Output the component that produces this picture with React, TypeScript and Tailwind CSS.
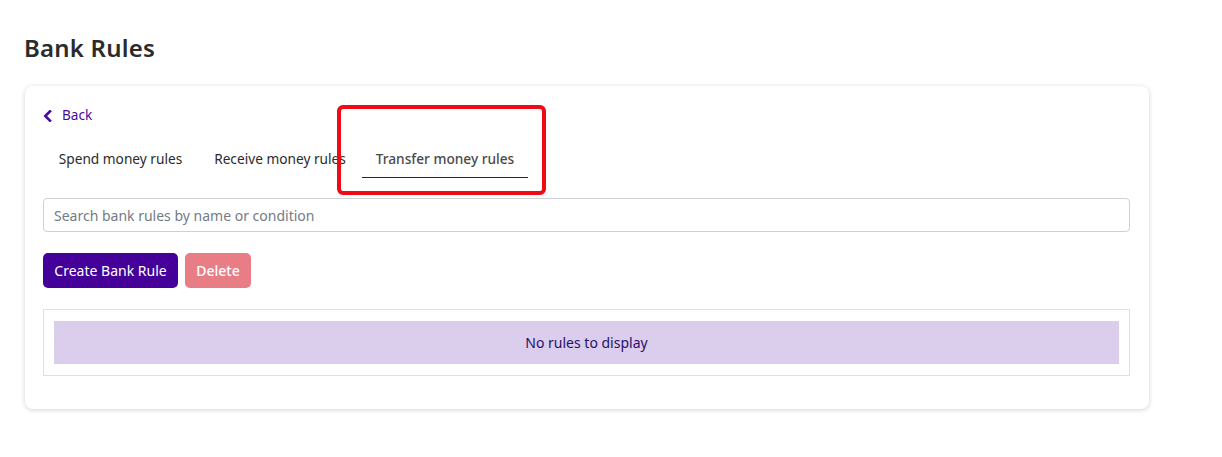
const tabs = [
  { label: "Spend money rules", width: "w-[155px]" },
  { label: "Receive money rules", width: "w-[164px]" },
  { label: "Transfer money rules", width: "w-[166px]" },
]

export default function App() {
  const active = 2

  return (
    <div className="min-h-screen bg-white font-['Noto_Sans',sans-serif] text-[#2b2b2b]">
      <div className="pl-[25px] pt-[30px] w-[1149px]">
        <h1 className="ml-[-1px] text-[24px] font-semibold leading-[36px] tracking-[0.2px] text-[#2b2b2b]">
          Bank Rules
        </h1>

        <div className="relative mt-[20px] rounded-lg bg-white pl-[18px] pr-[19px] pt-[19px] pb-[33px] shadow-[0_1px_5px_rgba(0,0,0,0.18)]">
          {/* Back link */}
          <button className="flex items-center gap-[10px] text-[14px] leading-5 text-[#4b0aa0]">
            <svg width="9" height="12" viewBox="0 0 9 12" className="mt-[1px]">
              <path
                d="M7 1.3 2.3 6 7 10.7"
                fill="none"
                stroke="#4b0aa0"
                strokeWidth="2.6"
                strokeLinecap="square"
              />
            </svg>
            <span className="text-[13.6px]">Back</span>
          </button>

          {/* Tabs */}
          <div className="mt-[14px] flex">
            {tabs.map((tab, i) => (
              <div
                key={tab.label}
                className={`${tab.width} pt-[10px] pb-[8px] text-center text-[13.7px] leading-5 ${
                  i === active
                    ? "border-b border-[#4b00a0] font-medium text-[#4a4a4a]"
                    : "text-[#2b2b2b]"
                }`}
              >
                {tab.label}
              </div>
            ))}
          </div>

          {/* Highlight box */}
          <div className="pointer-events-none absolute left-[312px] top-[19px] h-[90px] w-[209px] rounded-md border-[4px] border-[#f00a14]" />

          {/* Search */}
          <input
            className="mt-[20px] block h-[34px] w-full rounded border border-[#cdd1d6] px-[10px] text-[14px] outline-none placeholder:text-[#737b85]"
            placeholder="Search bank rules by name or condition"
          />

          {/* Actions */}
          <div className="mt-[21px] flex gap-[7px]">
            <button className="h-[35px] w-[135px] rounded-[5px] bg-[#46009a] text-[14px] text-white">
              Create Bank Rule
            </button>
            <button className="h-[35px] w-[66px] rounded-[5px] bg-[#e87d86] text-[14px] font-medium text-white">
              Delete
            </button>
          </div>

          {/* Empty table */}
          <div className="mt-[21px] border border-[#e0e0e0] px-[10px] py-[11px]">
            <div className="flex h-[43px] items-center justify-center bg-[#dbcdec] text-[14px] text-[#2a0f6e]">
              No rules to display
            </div>
          </div>
        </div>
      </div>
    </div>
  )
}
